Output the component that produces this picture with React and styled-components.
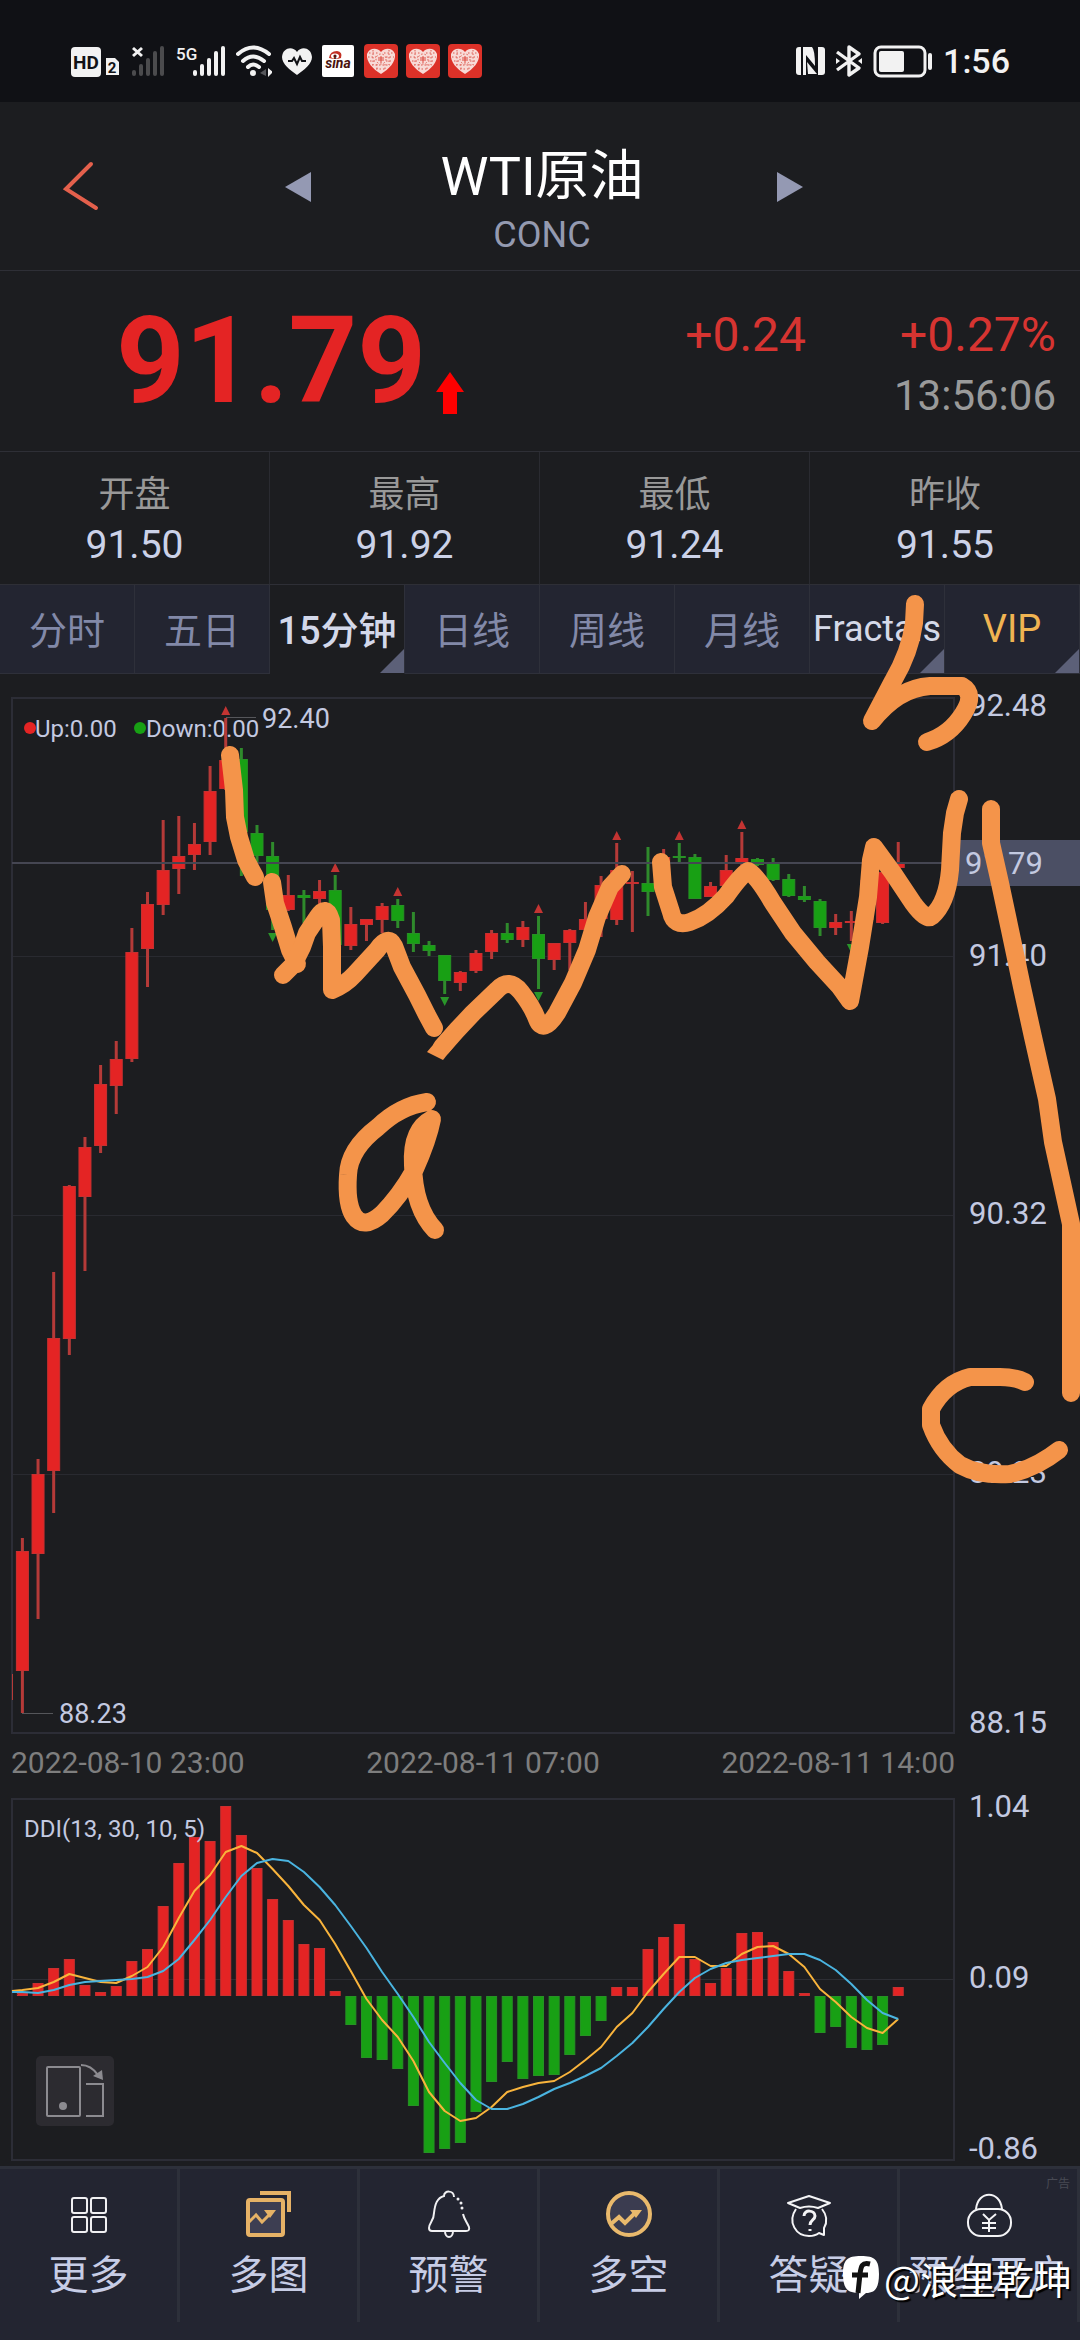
import React from "react";
import styled, { createGlobalStyle } from "styled-components";

const UP = "#e42424";
const UP_EDGE = "#b53a38";
const DOWN = "#18a014";
const DOWN_EDGE = "#2f8a2c";
const FRAME = "#2c2d36";
const LABEL = "#c3c9e0";

const stats = [
	{ name: "开盘", value: "91.50" },
	{ name: "最高", value: "91.92" },
	{ name: "最低", value: "91.24" },
	{ name: "昨收", value: "91.55" },
];

const tabs = [
	{ name: "分时" },
	{ name: "五日" },
	{ name: "15分钟", active: true, menu: true },
	{ name: "日线" },
	{ name: "周线" },
	{ name: "月线" },
	{ name: "Fractals", color: "#d5d9e8", size: 36, menu: true },
	{ name: "VIP", color: "#f0b452", menu: true },
];

// [up?, high, body top, body bottom, low] in chart units
const candles = [
	[1, 1538, 1551, 1671, 1713],
	[1, 1459, 1474, 1554, 1619],
	[1, 1272, 1338, 1471, 1513],
	[1, 1185, 1186, 1339, 1355],
	[1, 1137, 1147, 1197, 1271],
	[1, 1065, 1084, 1146, 1153],
	[1, 1041, 1059, 1086, 1114],
	[1, 928, 952, 1059, 1062],
	[1, 892, 904, 949, 987],
	[1, 820, 870, 905, 915],
	[1, 816, 856, 869, 894],
	[1, 823, 844, 855, 870],
	[1, 766, 791, 842, 855],
	[1, 718, 760, 789, 790],
	[0, 748, 759, 832, 876],
	[0, 825, 833, 856, 863],
	[0, 842, 856, 910, 930],
	[1, 875, 895, 910, 911],
	[0, 890, 895, 898, 923],
	[1, 880, 891, 899, 905],
	[0, 875, 890, 945, 945],
	[1, 907, 924, 946, 950],
	[1, 919, 919, 925, 941],
	[1, 903, 906, 920, 933],
	[0, 899, 905, 921, 928],
	[0, 912, 933, 944, 952],
	[0, 941, 945, 951, 956],
	[0, 955, 955, 981, 994],
	[1, 971, 972, 983, 991],
	[1, 950, 953, 971, 973],
	[1, 930, 933, 952, 959],
	[0, 923, 933, 940, 943],
	[1, 921, 927, 940, 947],
	[0, 916, 934, 959, 989],
	[1, 943, 943, 960, 970],
	[1, 929, 930, 943, 970],
	[1, 902, 919, 930, 935],
	[1, 876, 885, 919, 937],
	[1, 843, 870, 920, 925],
	[1, 871, 882, 884, 932],
	[0, 847, 883, 892, 916],
	[1, 849, 857, 883, 885],
	[0, 843, 856, 858, 863],
	[0, 854, 857, 899, 899],
	[1, 882, 886, 897, 897],
	[1, 855, 870, 886, 887],
	[1, 832, 858, 864, 870],
	[0, 858, 859, 865, 866],
	[0, 858, 863, 880, 881],
	[0, 874, 879, 896, 897],
	[0, 886, 896, 900, 902],
	[0, 899, 901, 928, 936],
	[1, 914, 922, 928, 935],
	[1, 911, 921, 923, 941],
	[1, 870, 880, 920, 925],
	[1, 865, 872, 923, 924],
	[1, 842, 863, 868, 868],
];

const upFractals = [13, 20, 24, 33, 38, 42, 46];
const downFractals = [16, 27, 33, 53];

const ZERO = 1996;
const bars = [
	1993, 1983, 1968, 1959, 1985, 1992, 1986, 1961, 1949, 1906, 1863, 1837, 1841,
	1806, 1835, 1868, 1899, 1920, 1944, 1948, 1991, 2025, 2058, 2060, 2069, 2106,
	2153, 2149, 2143, 2112, 2082, 2062, 2079, 2076, 2075, 2055, 2036, 2021, 1987,
	1987, 1949, 1937, 1924, 1959, 1983, 1968, 1933, 1932, 1942, 1971, 1993, 2033,
	2027, 2048, 2050, 2045, 1987,
];
const ddi = [
	1990, 1988, 1982, 1974, 1978, 1982, 1983, 1976, 1967, 1947, 1918, 1891, 1875,
	1852, 1846, 1853, 1869, 1886, 1905, 1920, 1944, 1971, 1999, 2020, 2037, 2061,
	2092, 2111, 2121, 2118, 2107, 2092, 2087, 2083, 2081, 2072, 2060, 2047, 2027,
	2013, 1992, 1974, 1957, 1957, 1966, 1966, 1954, 1947, 1946, 1954, 1967, 1989,
	2002, 2017, 2028, 2033, 2019,
];
const signal = [
	1992, 1993, 1990, 1985, 1982, 1981, 1980, 1979, 1977, 1971, 1959, 1940, 1920,
	1897, 1876, 1863, 1859, 1861, 1872, 1887, 1905, 1926, 1948, 1972, 1994, 2017,
	2042, 2063, 2083, 2100, 2109, 2109, 2104, 2097, 2089, 2083, 2076, 2068, 2056,
	2043, 2027, 2009, 1992, 1978, 1969, 1963, 1960, 1958, 1956, 1954, 1954, 1960,
	1970, 1984, 2000, 2013, 2019,
];

const xAt = (i) => 22.4 + i * 15.64;
const toPoints = (ys, startY) =>
	`12,${startY} ` + ys.map((y, i) => `${xAt(i).toFixed(1)},${y}`).join(" ");

// hand-drawn wave count
const strokes = [
	"M230 755 L234 790 L235 817 L239 837 L246 860 L255 877",
	"M272 882 L275 903 L283 927 L290 950 L297 964",
	"M283 975 L293 965 L302 947 L307 933 L317 918 Q326 903 331 920 L332 947 L332 990 Q345 985 355 974 L377 950 Q388 934 394 946 L402 967 L417 995 L427 1015 L434 1028",
	"M442 1047 L457 1030 L473 1013 L497 990 Q509 977 521 992 Q532 1006 537 1019 Q543 1035 557 1013 L573 983 L587 950 L597 917 L610 887 L622 874",
	"M427 1102 Q400 1106 378 1127 Q349 1149 348 1175 Q346 1204 354 1216 Q364 1230 382 1214 Q400 1196 414 1171 Q428 1140 432 1119 Q411 1130 413 1165 Q414 1208 435 1230",
	"M661 862 L663 887 L671 912 Q674 927 690 922 Q708 916 726 896 Q741 875 748 871 Q756 874 773 903 L793 933 L817 962 L840 987 L850 1001 L853 985 L860 947 L868 897 L871 860 L874 847 L893 873 L913 903 Q926 921 932 916 Q947 903 950 870 L952 833 L955 813 L959 799",
	"M991 809 L991 843 L1000 883 L1010 930 L1022 987 L1033 1037 L1047 1099 L1053 1142 L1071 1224 L1071 1393",
	"M915 604 L914 623 Q910 652 893 681 L872 721 Q898 688 930 686 L962 686 Q976 694 963 714 Q950 735 927 742",
	"M1025 1382 Q1015 1377 1000 1377 L970 1377 Q945 1383 931 1409 L931 1425 Q940 1450 960 1465 Q980 1476 1010 1474 Q1036 1468 1059 1450",
];

const SignalBars = ({ color }) => (
	<g fill={color}>
		<rect x="0" y="24" width="4" height="6" rx="2" />
		<rect x="7" y="18" width="4" height="12" rx="2" />
		<rect x="14" y="12" width="4" height="18" rx="2" />
		<rect x="21" y="5" width="4" height="25" rx="2" />
		<rect x="28" y="0" width="4" height="30" rx="2" />
	</g>
);

const HeartApp = () => (
	<svg width="34" height="34" viewBox="0 0 34 34">
		<rect width="34" height="34" rx="4" fill="#dc3128" />
		<path
			d="M17 8 C13 3 5 4 3 10 C2 18 9 25 17 30 C25 25 32 18 31 10 C29 4 21 3 17 8Z"
			fill="#f8dad6"
		/>
		<g stroke="#dc5a50" strokeWidth="1" strokeDasharray="1.5 2" fill="none">
			<path d="M5 9H14M20 9H29M4 13H12M22 13H30M6 17H12M22 17H28M8 21H26M12 25H22M9 6V21M25 6V21M13 20V27M21 20V27" />
			<circle cx="17" cy="15" r="5" />
		</g>
		<path d="M14 14H20M14 16H20M17 12V19" stroke="#dc4a40" strokeWidth="1" />
	</svg>
);

const StatusBar = () => (
	<Status>
		<StatusGroup>
			<svg width="49" height="34" viewBox="0 0 49 34">
				<rect x="0" y="3" width="30" height="30" rx="4" fill="#f2f2f2" />
				<text x="15" y="25" textAnchor="middle" fontSize="19" fontWeight="700" fill="#111216">
					HD
				</text>
				<path d="M35 14 H44 L48 18 V31 H35Z" fill="#f2f2f2" />
				<text x="41" y="29" textAnchor="middle" fontSize="15" fontWeight="700" fill="#111216">
					2
				</text>
			</svg>
			<svg width="36" height="34" viewBox="0 0 36 34">
				<g transform="translate(2 2)">
					<SignalBars color="#4b4b4d" />
				</g>
				<path d="M3 4 L12 12 M12 4 L3 12" stroke="#f2f2f2" strokeWidth="3" />
			</svg>
			<svg width="50" height="34" viewBox="0 0 50 34">
				<g transform="translate(17 2)">
					<SignalBars color="#f2f2f2" />
				</g>
				<text x="0" y="16" fontSize="17" fontWeight="500" fill="#f2f2f2">
					5G
				</text>
			</svg>
			<svg width="36" height="34" viewBox="0 0 36 34" fill="none" stroke="#f2f2f2" strokeWidth="4" strokeLinecap="round">
				<path d="M2 10 Q17 -3 33 10" />
				<path d="M7 17 Q17 8 28 17" />
				<path d="M12 23 Q17 18 23 23" />
				<circle cx="17" cy="29" r="3" fill="#f2f2f2" stroke="none" />
				<path d="M30 25 L24 29 L30 32Z" fill="#55565a" stroke="none" />
				<path d="M32 24 L37 28 L32 33Z" fill="#f2f2f2" stroke="none" />
			</svg>
			<svg width="30" height="34" viewBox="0 0 30 34">
				<path
					d="M15 8 C11 2 1 3 0 13 C0 20 8 26 15 31 C22 26 30 20 30 13 C29 3 19 2 15 8Z"
					fill="#f2f2f2"
				/>
				<path d="M6 17 H10 L12 14 L15 20 L18 13 L20 17 H24" fill="none" stroke="#111216" strokeWidth="2" />
			</svg>
			<svg width="32" height="34" viewBox="0 0 32 34">
				<rect y="1" width="32" height="32" rx="2" fill="#fff" />
				<path d="M7 14 Q8 7 15 7 Q21 8 19 14 Q14 16 7 14Z" fill="#c33024" />
				<ellipse cx="13" cy="12" rx="4" ry="2.6" fill="#fff" />
				<circle cx="13" cy="12" r="1.6" fill="#5a150f" />
				<text x="16" y="24" textAnchor="middle" fontSize="14" fontWeight="700" fontStyle="italic" fill="#4a120d">
					sina
				</text>
			</svg>
			<AppIcons>
				<HeartApp />
				<HeartApp />
				<HeartApp />
			</AppIcons>
		</StatusGroup>
		<StatusGroup>
			<svg width="29" height="34" viewBox="0 0 29 34" fill="#f2f2f2">
				<path d="M3 3 H5 V31 H3 Q0 31 0 28 V6 Q0 3 3 3Z" />
				<path d="M7 3 H16 Q19 6 19 22 L10 11 V31 H7Z" />
				<path d="M22 3 H26 Q29 3 29 6 V28 Q29 31 26 31 H22Z" />
				<path d="M11 18 L21 30 H12Z" />
			</svg>
			<svg width="28" height="34" viewBox="0 0 28 34" fill="none" stroke="#f2f2f2" strokeWidth="3.4">
				<path d="M2 8 L24 24 L14 31 V3 L24 10 L2 26" strokeLinejoin="round" />
				<path d="M1 14 V20 L5 17Z M27 14 V20 L23 17Z" fill="#f2f2f2" stroke="none" />
			</svg>
			<svg width="60" height="34" viewBox="0 0 60 34">
				<rect x="2" y="3" width="50" height="29" rx="6" fill="none" stroke="#f2f2f2" strokeWidth="3" />
				<rect x="6" y="7" width="25" height="21" rx="2" fill="#f2f2f2" />
				<rect x="55" y="9" width="4" height="17" rx="2" fill="#f2f2f2" />
			</svg>
			<Clock>1:56</Clock>
		</StatusGroup>
	</Status>
);

const PriceChart = () => (
	<ChartSvg viewBox="0 674 1080 1066" role="img" aria-label="WTI原油 15分钟">
		<g stroke="#292a30" strokeWidth="1">
			<path d="M12 956.5H954M12 1215.5H954M12 1474.5H954" />
		</g>
		<rect x="12" y="698" width="942" height="1035" fill="none" stroke={FRAME} strokeWidth="2" />
		<path d="M226 717.5H256M22 1713.5H53" stroke="#55565a" strokeWidth="1" />
		<rect x="12" y="1674" width="1" height="26" fill={UP_EDGE} />
		<g fontSize="24" fill={LABEL}>
			<circle cx="30" cy="728" r="6" fill={UP} />
			<text x="35" y="737">Up:0.00</text>
			<circle cx="140" cy="728" r="6" fill={DOWN} />
			<text x="146" y="737">Down:0.00</text>
		</g>
		{candles.map(([up, high, top, bottom, low], i) => (
			<g key={i}>
				<rect x={xAt(i) - 1.5} y={high} width="3" height={low - high} fill={up ? UP_EDGE : DOWN_EDGE} />
				<rect
					x={xAt(i) - 6}
					y={top + 0.5}
					width="12"
					height={Math.max(bottom - top - 1, 1)}
					fill={up ? UP : DOWN}
					stroke={up ? "#c93030" : "#279225"}
					strokeWidth="1"
				/>
			</g>
		))}
		{upFractals.map((i) => {
			const y = candles[i][1] - 3;
			return <path key={i} d={`M${xAt(i) - 4.5} ${y}h9l-4.5 -9z`} fill="#c43432" />;
		})}
		{downFractals.map((i) => {
			const y = candles[i][4] + 3;
			return <path key={i} d={`M${xAt(i) - 4.5} ${y}h9l-4.5 9z`} fill="#2a962a" />;
		})}
		<rect x="12" y="862" width="942" height="2" fill="#454652" />
		<g fontSize="27" fill={LABEL}>
			<text x="262" y="728">92.40</text>
			<text x="59" y="1723">88.23</text>
		</g>
		<rect x="955" y="840" width="125" height="46" fill="#4b4f64" />
		<g fontSize="31" fill={LABEL}>
			<text x="969" y="716">92.48</text>
			<text x="965" y="874">91.79</text>
			<text x="969" y="966">91.40</text>
			<text x="969" y="1224">90.32</text>
			<text x="969" y="1483">89.23</text>
			<text x="969" y="1733">88.15</text>
		</g>
	</ChartSvg>
);

const IndicatorChart = () => (
	<ChartSvg viewBox="0 1786 1080 380" role="img" aria-label="DDI">
		<path d="M12 1979.5H954" stroke="#2d2e34" />
		<rect x="12" y="1799" width="942" height="361" fill="none" stroke={FRAME} strokeWidth="2" />
		{bars.map((y, i) => (
			<rect
				key={i}
				x={xAt(i) - 5}
				y={Math.min(y, ZERO) + 0.5}
				width="10"
				height={Math.max(Math.abs(y - ZERO) - 1, 1)}
				fill={y < ZERO ? UP : DOWN}
				stroke={y < ZERO ? "#c93030" : "#279225"}
			/>
		))}
		<text x="24" y="1837" fontSize="24" fill={LABEL}>
			DDI(13, 30, 10, 5)
		</text>
		<g fill="none" strokeWidth="2" strokeLinejoin="round">
			<polyline points={toPoints(ddi, 1991)} stroke="#f9b43c" />
			<polyline points={toPoints(signal, 1992)} stroke="#4ab4e0" />
		</g>
		<g fontSize="31" fill={LABEL}>
			<text x="969" y="1817">1.04</text>
			<text x="969" y="1988">0.09</text>
			<text x="969" y="2159">-0.86</text>
		</g>
	</ChartSvg>
);

const GridIcon = () => (
	<NavSvg viewBox="0 0 50 50" stroke="#f0f0f2" strokeWidth="2">
		<rect x="8" y="8" width="15" height="15" rx="2" />
		<rect x="27" y="8" width="15" height="15" rx="2" />
		<rect x="8" y="27" width="15" height="15" rx="2" />
		<rect x="27" y="27" width="15" height="15" rx="2" />
	</NavSvg>
);

const ChartsIcon = () => (
	<NavSvg viewBox="0 0 50 50" stroke="#e6b266" strokeWidth="4">
		<rect x="4" y="10" width="35" height="35" rx="2" fill="#3d3e52" />
		<path d="M16 3 H45 V22" />
		<path d="M4 33 L12 25 L18 32 L27 23" strokeWidth="3" />
		<path d="M20 20 H32 L26 28Z" fill="#e6b266" stroke="none" />
	</NavSvg>
);

const BellIcon = () => (
	<NavSvg viewBox="0 0 50 50" stroke="#f0f0f2" strokeWidth="2">
		<path d="M30 7 C30 0 20 0 20 6 C13 8 11 14 10 23 C10 31 5 33 5 38 Q5 41 8 41 H42 Q46 41 45 37 C43 32 40 29 39 24" />
		<path d="M34 9 v.1 M37 13 v.1 M38 18 v.1" strokeWidth="3" strokeLinecap="round" />
		<path d="M21 41 C21 49 29 49 29 41" />
	</NavSvg>
);

const TrendIcon = () => (
	<NavSvg viewBox="0 0 50 50" stroke="#e9b96c" strokeWidth="4">
		<circle cx="25" cy="24" r="21" fill="#3b3c50" />
		<path d="M7 34 L15 27 L21 33 L31 23" />
		<path d="M26 20 H38 L32 28Z" fill="#e9b96c" stroke="none" />
	</NavSvg>
);

const QuestionIcon = () => (
	<NavSvg viewBox="0 0 50 50" stroke="#f4f4f6" strokeWidth="2" strokeLinejoin="round">
		<path d="M4 13 L25 6 L46 13 L34 18 Q25 15 16 18Z" />
		<path d="M12 19 C3 32 12 46 25 46 Q31 46 35 43 L40 45 V38 C44 31 42 24 38 19" />
		<path d="M20 26 C20 19 31 20 31 26 C31 30 26 30 26 35 M26 39 V41" strokeWidth="3" />
	</NavSvg>
);

const PurseIcon = () => (
	<NavSvg viewBox="0 0 50 50" stroke="#f4f4f6" strokeWidth="2">
		<rect x="4" y="19" width="43" height="27" rx="13" />
		<path d="M12 19 C14 0 36 0 38 19" />
		<path d="M19 24 L25 30 L32 24 M25 30 V42 M18 33 H32 M18 38 H32" />
	</NavSvg>
);

const navItems = [
	{ name: "更多", Icon: GridIcon },
	{ name: "多图", Icon: ChartsIcon },
	{ name: "预警", Icon: BellIcon },
	{ name: "多空", Icon: TrendIcon },
	{ name: "答疑", Icon: QuestionIcon },
	{ name: "预约开户", Icon: PurseIcon, ad: true },
];

const App = () => (
	<Page>
		<GlobalStyle />
		<StatusBar />
		<Header>
			<BackButton aria-label="返回">
				<svg width="38" height="54" viewBox="0 0 38 54" fill="none" stroke="#e4604c" strokeWidth="4" strokeLinecap="round">
					<path d="M29 4 L4 29 L34 48" />
				</svg>
			</BackButton>
			<Switcher>
				<IconButton aria-label="上一个">
					<svg width="26" height="30" viewBox="0 0 26 30" fill="#9499b3">
						<path d="M26 0 V30 L0 15Z" />
					</svg>
				</IconButton>
				<Heading>
					<Title>WTI原油</Title>
					<Subtitle>CONC</Subtitle>
				</Heading>
				<IconButton aria-label="下一个">
					<svg width="26" height="30" viewBox="0 0 26 30" fill="#9499b3">
						<path d="M0 0 V30 L26 15Z" />
					</svg>
				</IconButton>
			</Switcher>
		</Header>
		<Quote>
			<PriceBox>
				<Price>91.79</Price>
				<svg width="28" height="45" viewBox="0 0 28 45" fill="#fe0000">
					<path d="M14 0 L28 20 H21 V42 H7 V20 H0Z" />
				</svg>
			</PriceBox>
			<Change>+0.24</Change>
			<QuoteSide>
				<Change>+0.27%</Change>
				<Time>13:56:06</Time>
			</QuoteSide>
		</Quote>
		<Stats>
			{stats.map((s) => (
				<Stat key={s.name}>
					<StatName>{s.name}</StatName>
					<StatValue>{s.value}</StatValue>
				</Stat>
			))}
		</Stats>
		<Tabs>
			{tabs.map((t) => (
				<Tab key={t.name} $active={t.active} $menu={t.menu} $color={t.color} $size={t.size}>
					{t.name}
				</Tab>
			))}
		</Tabs>
		<PriceChart />
		<Dates>
			<span>2022-08-10 23:00</span>
			<span>2022-08-11 07:00</span>
			<span>2022-08-11 14:00</span>
		</Dates>
		<IndicatorPanel>
			<IndicatorChart />
			<RotateButton aria-label="横屏">
				<svg width="78" height="70" viewBox="0 0 78 70" fill="none" stroke="#8c8b90" strokeWidth="2">
					<rect x="11" y="11" width="33" height="49" rx="1" />
					<circle cx="27" cy="50" r="4" fill="#8c8b90" stroke="none" />
					<path d="M50 28 H67 V60 H50" />
					<path d="M45 9 Q55 9 62 19" />
					<path d="M67 24 L57 20 L66 14Z" fill="#8c8b90" stroke="none" />
				</svg>
			</RotateButton>
		</IndicatorPanel>
		<BottomNav>
			{navItems.map(({ name, Icon, ad }) => (
				<NavItem key={name}>
					<Icon />
					<span>{name}</span>
					{ad && <AdTag>广告</AdTag>}
				</NavItem>
			))}
		</BottomNav>
		<Drawing viewBox="0 0 1080 2340" aria-hidden="true">
			{strokes.map((d) => (
				<path key={d} d={d} />
			))}
			<path d="M427 1052 L443 1060 L463 1035 L449 1026Z" fill="#f4944a" stroke="none" />
		</Drawing>
		<Watermark>
			<svg width="38" height="46" viewBox="0 0 38 46">
				<path
					d="M19 1 C33 1 37 5 37 19 C37 33 33 38 24 38 L17 44 V38 C5 38 1 33 1 19 C1 5 5 1 19 1Z"
					fill="#fff"
				/>
				<path d="M28 9 C20 7 19 11 18 19 L16 38 M10 20 H26" fill="none" stroke="#111" strokeWidth="5" />
			</svg>
			<span>@浪里乾坤</span>
		</Watermark>
	</Page>
);

const GlobalStyle = createGlobalStyle`
	* {
		box-sizing: border-box;
	}
	body {
		margin: 0;
		background: #1c1d20;
		font-family: Roboto, "Noto Sans CJK SC", sans-serif;
	}
	button {
		border: none;
		padding: 0;
		background: none;
		font: inherit;
		color: inherit;
	}
	svg {
		display: block;
	}
`;

const Page = styled.div`
	position: relative;
	background: #1c1d20;
	color: #fff;
	overflow: hidden;
`;

const Status = styled.div`
	display: flex;
	align-items: center;
	justify-content: space-between;
	height: 102px;
	padding: 20px 70px 0 71px;
	background: #101115;
`;

const StatusGroup = styled.div`
	display: flex;
	align-items: center;
	gap: 10px;
`;

const AppIcons = styled.div`
	display: flex;
	gap: 8px;
`;

const Clock = styled.span`
	font-size: 34px;
	font-weight: 500;
	line-height: 34px;
	color: #f2f2f2;
`;

const Header = styled.header`
	display: grid;
	grid-template-columns: 1fr 518px 1fr;
	height: 169px;
	border-bottom: 1px solid #2e2f36;
`;

const BackButton = styled.button`
	justify-self: start;
	padding: 2px 0 0 62px;
`;

const Switcher = styled.div`
	display: flex;
	align-items: center;
	justify-content: space-between;
	padding-left: 4px;
	margin-right: -4px;
`;

const IconButton = styled.button`
	padding-top: 1px;
`;

const Heading = styled.div`
	text-align: center;
	padding: 28px 4px 0 0;
`;

const Title = styled.h1`
	margin: 0;
	font-size: 54px;
	font-weight: 400;
	line-height: 70px;
`;

const Subtitle = styled.div`
	font-size: 36px;
	line-height: 46px;
	color: #949ab0;
`;

const Quote = styled.section`
	display: flex;
	height: 181px;
	padding: 34px 24px 0 116px;
	border-bottom: 1px solid #2e2f36;
`;

const PriceBox = styled.div`
	flex: 1;
	display: flex;
	align-items: flex-end;
	align-self: flex-start;
	gap: 10px;
`;

const Price = styled.strong`
	font-size: 120px;
	font-weight: 700;
	line-height: 112px;
	color: ${UP};
`;

const Change = styled.div`
	font-size: 48px;
	line-height: 60px;
	color: #d63431;
`;

const QuoteSide = styled.div`
	margin-left: 88px;
	text-align: right;
`;

const Time = styled.div`
	font-size: 42px;
	line-height: 62px;
	color: #9a9a9a;
`;

const Stats = styled.dl`
	display: grid;
	grid-template-columns: repeat(4, 1fr);
	margin: 0;
	border-bottom: 1px solid #2e2f36;
`;

const Stat = styled.div`
	height: 132px;
	padding-top: 20px;
	text-align: center;
	border-right: 1px solid #2a2b31;

	&:last-child {
		border-right: none;
	}
`;

const StatName = styled.dt`
	font-size: 36px;
	line-height: 46px;
	color: #999;
`;

const StatValue = styled.dd`
	margin: 0;
	font-size: 39px;
	line-height: 54px;
	color: #ccd2e8;
`;

const Tabs = styled.nav`
	display: grid;
	grid-template-columns: repeat(8, minmax(0, 1fr));
	height: 89px;
`;

const Tab = styled.button`
	position: relative;
	padding-bottom: ${({ $color }) => ($color ? 0 : 4)}px;
	font-size: ${({ $size }) => $size || 38}px;
	font-weight: ${({ $active }) => ($active ? 500 : 400)};
	white-space: nowrap;
	color: ${({ $active, $color }) => $color || ($active ? "#d3d8ea" : "#8289a8")};
	background: ${({ $active }) => ($active ? "#1c1d20" : "#232531")};
	border-right: 1px solid #2e303a;
	border-bottom: 1px solid ${({ $active }) => ($active ? "#1c1d20" : "#2e303a")};

	&::after {
		content: "";
		display: ${({ $menu }) => ($menu ? "block" : "none")};
		position: absolute;
		right: 0;
		bottom: 0;
		border-left: 24px solid transparent;
		border-bottom: 24px solid #5c6078;
	}
`;

const ChartSvg = styled.svg`
	width: 100%;
	height: auto;
	overflow: visible;
`;

const Dates = styled.div`
	display: flex;
	justify-content: space-between;
	padding: 0 125px 0 11px;
	font-size: 30px;
	line-height: 46px;
	color: #7e7e7e;
`;

const IndicatorPanel = styled.div`
	position: relative;
`;

const RotateButton = styled.button`
	position: absolute;
	left: 36px;
	bottom: 40px;
	border-radius: 5px;
	background: #2c2b30;
`;

const BottomNav = styled.nav`
	display: grid;
	grid-template-columns: repeat(6, minmax(0, 1fr));
	padding-bottom: 18px;
	border-top: 3px solid #2d303a;
	background: #232531;
`;

const NavItem = styled.button`
	position: relative;
	display: flex;
	flex-direction: column;
	align-items: center;
	gap: 12px;
	height: 153px;
	padding-top: 21px;
	border-right: 3px solid #2d303a;
	font-size: 40px;
	line-height: 48px;
	white-space: nowrap;
	color: #c7cde6;
`;

const NavSvg = styled.svg`
	width: 50px;
	height: 50px;
	fill: none;
	flex-shrink: 0;
`;

const AdTag = styled.small`
	position: absolute;
	top: 8px;
	right: 7px;
	font-size: 12px;
	line-height: 14px;
	color: #484a54;
`;

const Drawing = styled.svg`
	position: absolute;
	top: 0;
	left: 0;
	width: 100%;
	fill: none;
	stroke: #f4944a;
	stroke-width: 18px;
	stroke-linecap: round;
	stroke-linejoin: round;
	pointer-events: none;
`;

const Watermark = styled.div`
	position: absolute;
	right: 8px;
	bottom: 39px;
	display: flex;
	align-items: center;
	gap: 4px;
	font-family: "Noto Sans CJK SC", sans-serif;
	font-size: 38px;
	line-height: 46px;
	color: #fff;
	text-shadow: 2px 2px 1px #000;
`;

export default App;
